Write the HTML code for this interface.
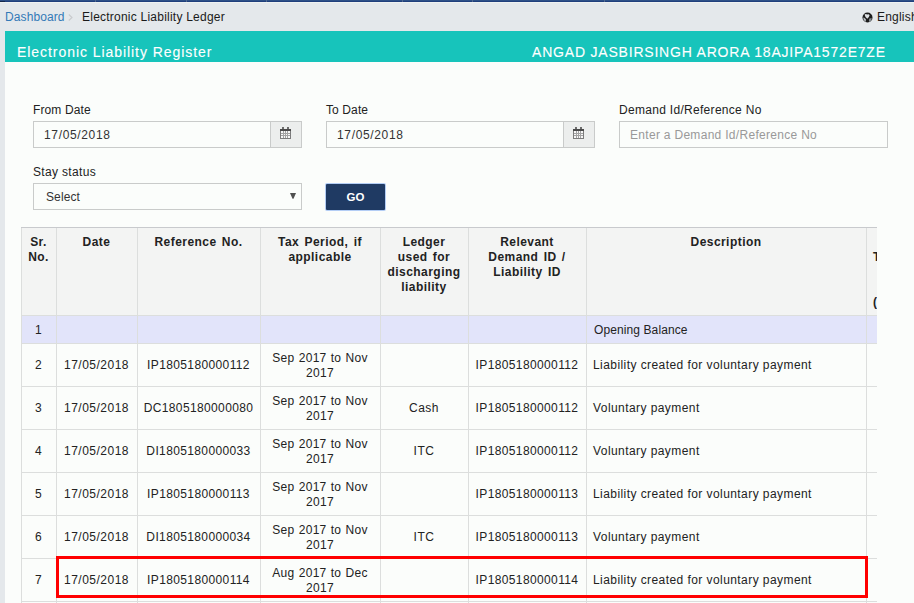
<!DOCTYPE html>
<html><head><meta charset="utf-8"><title>Electronic Liability Register</title>
<style>
*{margin:0;padding:0;box-sizing:border-box}
html,body{width:914px;height:603px;overflow:hidden}
body{background:#e4e8eb;font-family:"Liberation Sans", sans-serif;font-size:12px;color:#222;position:relative}
.a{position:absolute;white-space:nowrap}
svg{display:block}
.t{position:absolute;white-space:nowrap;line-height:15px;height:15px}
.b{font-weight:bold}
</style></head>
<body>
<div class="a" style="left:0;top:0;width:914px;height:1px;background:#2d5087"></div>
<div class="a" style="left:0;top:1px;width:914px;height:1px;background:#1f3f7c"></div>
<div class="a" style="left:0;top:2px;width:914px;height:1px;background:#eff2f1"></div>
<div class="a" style="left:0;top:1px;width:5px;height:1px;background:#15294d"></div>
<div class="a" style="left:95px;top:0;width:1px;height:2px;background:#52698f"></div>
<div class="a" style="left:186px;top:0;width:1px;height:2px;background:#52698f"></div>
<div class="a" style="left:266px;top:0;width:1px;height:2px;background:#52698f"></div>
<div class="a" style="left:402px;top:0;width:1px;height:2px;background:#52698f"></div>
<div class="a" style="left:472px;top:0;width:1px;height:2px;background:#52698f"></div>
<div class="a" style="left:604px;top:0;width:1px;height:2px;background:#52698f"></div>
<div class="t" style="left:5px;top:10px;color:#337ab7;letter-spacing:0.1px">Dashboard</div>
<div class="a" style="left:68px;top:14px;width:5px;height:7px"><svg width="5" height="7" viewBox="0 0 5 7"><path d="M0.8 0.5 L4 3.5 L0.8 6.5" fill="none" stroke="#c9cbcd" stroke-width="1.1"/></svg></div>
<div class="t" style="left:82px;top:10px;color:#1a1a1a;letter-spacing:0.23px">Electronic Liability Ledger</div>
<div class="a" style="left:862px;top:12px;width:11px;height:11px"><svg width="11" height="11" viewBox="0 0 11 11"><circle cx="5.5" cy="5.5" r="5" fill="#1c1c1c"/><path d="M2.6 2.4 Q4 1.4 5.2 2.6 Q6.8 1.6 7.6 3.2 Q7.4 5 5.3 6.8 Q3 5.2 2.6 2.4Z" fill="#dde1e4"/><path d="M1.2 5.6 Q2.8 5.8 4 7.6 L3.6 10 Q1.2 8.8 1.2 5.6Z" fill="#b8bdc2"/><path d="M7.4 6.6 Q8.8 5.8 9.9 6.4 Q9.4 8.8 7.2 9.9 Q6.6 8.2 7.4 6.6Z" fill="#8a9095"/></svg></div>
<div class="t" style="left:877px;top:10px;color:#1a1a1a;letter-spacing:0.2px">English</div>
<div class="a" style="left:5px;top:31px;width:909px;height:31px;background:#17c4bb"></div>
<div class="a" style="left:17px;top:44px;color:#fff;font-size:14px;line-height:16px;letter-spacing:0.94px;-webkit-text-stroke:0.12px #fff">Electronic Liability Register</div>
<div class="a" style="left:532px;top:44px;color:#fff;font-size:14px;line-height:16px;letter-spacing:0.8px;-webkit-text-stroke:0.12px #fff">ANGAD JASBIRSINGH ARORA 18AJIPA1572E7ZE</div>
<div class="a" style="left:5px;top:62px;width:909px;height:541px;background:#fbfdfb"></div>
<div class="t" style="left:33px;top:103px;color:#222;letter-spacing:0.11px">From Date</div>
<div class="t" style="left:326px;top:103px;color:#222;letter-spacing:0.11px">To Date</div>
<div class="t" style="left:619px;top:103px;color:#222;letter-spacing:0.3px">Demand Id/Reference No</div>
<div class="t" style="left:33px;top:165px;color:#222;letter-spacing:0.33px">Stay status</div>
<div class="a" style="left:33px;top:121px;width:269px;height:27px;border:1px solid #c9cbca;background:#fbfdfb"></div>
<div class="a" style="left:270px;top:121px;width:32px;height:27px;border:1px solid #c9cbca;background:#eceeed"></div>
<div class="t" style="left:44px;top:128px;color:#333;letter-spacing:0.65px">17/05/2018</div>
<div class="a" style="left:280px;top:127px;width:11px;height:12px"><svg width="11" height="12" viewBox="0 0 11 12" shape-rendering="crispEdges"><rect x="1" y="4" width="9" height="7" fill="#f7f7f7"/><rect x="2" y="0" width="2" height="2" fill="#6c6c6c"/><rect x="7" y="0" width="2" height="2" fill="#6c6c6c"/><rect x="0" y="2" width="11" height="2" fill="#4a4a4a"/><rect x="0" y="4" width="1" height="8" fill="#7c7c7c"/><rect x="10" y="4" width="1" height="8" fill="#7c7c7c"/><rect x="0" y="11" width="11" height="1" fill="#7c7c7c"/><rect x="3" y="4" width="1" height="7" fill="#a3a3a3"/><rect x="5" y="4" width="1" height="7" fill="#a3a3a3"/><rect x="7" y="4" width="1" height="7" fill="#a3a3a3"/><rect x="1" y="6" width="9" height="1" fill="#a3a3a3"/><rect x="1" y="8" width="9" height="1" fill="#a3a3a3"/></svg></div>
<div class="a" style="left:326px;top:121px;width:269px;height:27px;border:1px solid #c9cbca;background:#fbfdfb"></div>
<div class="a" style="left:563px;top:121px;width:32px;height:27px;border:1px solid #c9cbca;background:#eceeed"></div>
<div class="t" style="left:337px;top:128px;color:#333;letter-spacing:0.65px">17/05/2018</div>
<div class="a" style="left:573px;top:127px;width:11px;height:12px"><svg width="11" height="12" viewBox="0 0 11 12" shape-rendering="crispEdges"><rect x="1" y="4" width="9" height="7" fill="#f7f7f7"/><rect x="2" y="0" width="2" height="2" fill="#6c6c6c"/><rect x="7" y="0" width="2" height="2" fill="#6c6c6c"/><rect x="0" y="2" width="11" height="2" fill="#4a4a4a"/><rect x="0" y="4" width="1" height="8" fill="#7c7c7c"/><rect x="10" y="4" width="1" height="8" fill="#7c7c7c"/><rect x="0" y="11" width="11" height="1" fill="#7c7c7c"/><rect x="3" y="4" width="1" height="7" fill="#a3a3a3"/><rect x="5" y="4" width="1" height="7" fill="#a3a3a3"/><rect x="7" y="4" width="1" height="7" fill="#a3a3a3"/><rect x="1" y="6" width="9" height="1" fill="#a3a3a3"/><rect x="1" y="8" width="9" height="1" fill="#a3a3a3"/></svg></div>
<div class="a" style="left:619px;top:121px;width:269px;height:27px;border:1px solid #c9cbca;background:#fbfdfb"></div>
<div class="t" style="left:630px;top:128px;color:#999;letter-spacing:0.3px">Enter a Demand Id/Reference No</div>
<div class="a" style="left:33px;top:183px;width:269px;height:27px;border:1px solid #c9cbca;background:#fbfdfb"></div>
<div class="t" style="left:46px;top:190px;color:#333;letter-spacing:0.1px">Select</div>
<div class="a" style="left:290px;top:193px;width:6px;height:6px"><svg width="6" height="6" viewBox="0 0 6 6"><path d="M0 0H6L3.5 5.8H2.5Z" fill="#505050"/></svg></div>
<div class="a" style="left:326px;top:184px;width:59px;height:26px;background:#1f3a63;box-shadow:0 0 0 1px #b3cdf5;border-radius:1px"></div>
<div class="t b" style="left:326px;top:190px;width:59px;text-align:center;color:#fff;font-size:11.5px">GO</div>
<div class="a" style="left:21px;top:228px;width:856px;height:87px;background:#f3f4f3"></div>
<div class="a" style="left:21px;top:316px;width:856px;height:27px;background:#e2e4fa"></div>
<div class="a" style="left:21px;top:227px;width:856px;height:1px;background:#c8cacd"></div>
<div class="a" style="left:21px;top:315px;width:856px;height:1px;background:#dcdedd"></div>
<div class="a" style="left:21px;top:343px;width:856px;height:1px;background:#dcdedd"></div>
<div class="a" style="left:21px;top:386px;width:856px;height:1px;background:#dcdedd"></div>
<div class="a" style="left:21px;top:429px;width:856px;height:1px;background:#dcdedd"></div>
<div class="a" style="left:21px;top:472px;width:856px;height:1px;background:#dcdedd"></div>
<div class="a" style="left:21px;top:515px;width:856px;height:1px;background:#dcdedd"></div>
<div class="a" style="left:21px;top:558px;width:856px;height:1px;background:#dcdedd"></div>
<div class="a" style="left:21px;top:601px;width:856px;height:1px;background:#dcdedd"></div>
<div class="a" style="left:21px;top:228px;width:1px;height:375px;background:#dcdedd"></div>
<div class="a" style="left:56px;top:228px;width:1px;height:375px;background:#dcdedd"></div>
<div class="a" style="left:137px;top:228px;width:1px;height:375px;background:#dcdedd"></div>
<div class="a" style="left:260px;top:228px;width:1px;height:375px;background:#dcdedd"></div>
<div class="a" style="left:380px;top:228px;width:1px;height:375px;background:#dcdedd"></div>
<div class="a" style="left:468px;top:228px;width:1px;height:375px;background:#dcdedd"></div>
<div class="a" style="left:586px;top:228px;width:1px;height:375px;background:#dcdedd"></div>
<div class="a" style="left:866px;top:228px;width:1px;height:375px;background:#dcdedd"></div>
<div class="t b" style="left:21px;top:235px;width:35px;text-align:center;color:#222;letter-spacing:0.45px;word-spacing:1.5px">Sr.</div>
<div class="t b" style="left:21px;top:250px;width:35px;text-align:center;color:#222;letter-spacing:0.45px;word-spacing:1.5px">No.</div>
<div class="t b" style="left:56px;top:235px;width:81px;text-align:center;color:#222;letter-spacing:0.45px;word-spacing:1.5px">Date</div>
<div class="t b" style="left:137px;top:235px;width:123px;text-align:center;color:#222;letter-spacing:0.45px;word-spacing:1.5px">Reference No.</div>
<div class="t b" style="left:260px;top:235px;width:120px;text-align:center;color:#222;letter-spacing:0.45px;word-spacing:1.5px">Tax Period, if</div>
<div class="t b" style="left:260px;top:250px;width:120px;text-align:center;color:#222;letter-spacing:0.45px;word-spacing:1.5px">applicable</div>
<div class="t b" style="left:380px;top:235px;width:88px;text-align:center;color:#222;letter-spacing:0.45px;word-spacing:1.5px">Ledger</div>
<div class="t b" style="left:380px;top:250px;width:88px;text-align:center;color:#222;letter-spacing:0.45px;word-spacing:1.5px">used for</div>
<div class="t b" style="left:380px;top:265px;width:88px;text-align:center;color:#222;letter-spacing:0.45px;word-spacing:1.5px">discharging</div>
<div class="t b" style="left:380px;top:280px;width:88px;text-align:center;color:#222;letter-spacing:0.45px;word-spacing:1.5px">liability</div>
<div class="t b" style="left:468px;top:235px;width:118px;text-align:center;color:#222;letter-spacing:0.45px;word-spacing:1.5px">Relevant</div>
<div class="t b" style="left:468px;top:250px;width:118px;text-align:center;color:#222;letter-spacing:0.45px;word-spacing:1.5px">Demand ID /</div>
<div class="t b" style="left:468px;top:265px;width:118px;text-align:center;color:#222;letter-spacing:0.45px;word-spacing:1.5px">Liability ID</div>
<div class="t b" style="left:586px;top:235px;width:280px;text-align:center;color:#222;letter-spacing:0.45px;word-spacing:1.5px">Description</div>
<div class="t b" style="left:873px;top:250px;color:#222">T</div>
<div class="t b" style="left:873px;top:295px;color:#222">(</div>
<div class="a" style="left:877px;top:227px;width:37px;height:376px;background:#fbfdfb"></div>
<div class="t" style="left:21px;top:323px;width:35px;text-align:center;color:#222;letter-spacing:0.5px;word-spacing:0.5px">1</div>
<div class="t" style="left:594px;top:323px;color:#222;letter-spacing:0.1px">Opening Balance</div>
<div class="t" style="left:21px;top:358px;width:35px;text-align:center;color:#222;letter-spacing:0.5px;word-spacing:0.5px">2</div>
<div class="t" style="left:56px;top:358px;width:81px;text-align:center;color:#222;letter-spacing:0.5px;word-spacing:0.5px">17/05/2018</div>
<div class="t" style="left:137px;top:358px;width:123px;text-align:center;color:#222;letter-spacing:0.37px;word-spacing:0.5px">IP1805180000112</div>
<div class="t" style="left:260px;top:351px;width:120px;text-align:center;color:#222;letter-spacing:0.3px;word-spacing:0.5px">Sep 2017 to Nov</div>
<div class="t" style="left:260px;top:366px;width:120px;text-align:center;color:#222;letter-spacing:0.3px;word-spacing:0.5px">2017</div>
<div class="t" style="left:468px;top:358px;width:118px;text-align:center;color:#222;letter-spacing:0.37px;word-spacing:0.5px">IP1805180000112</div>
<div class="t" style="left:593px;top:358px;color:#222;letter-spacing:0.43px">Liability created for voluntary payment</div>
<div class="t" style="left:21px;top:401px;width:35px;text-align:center;color:#222;letter-spacing:0.5px;word-spacing:0.5px">3</div>
<div class="t" style="left:56px;top:401px;width:81px;text-align:center;color:#222;letter-spacing:0.5px;word-spacing:0.5px">17/05/2018</div>
<div class="t" style="left:137px;top:401px;width:123px;text-align:center;color:#222;letter-spacing:0.37px;word-spacing:0.5px">DC1805180000080</div>
<div class="t" style="left:260px;top:394px;width:120px;text-align:center;color:#222;letter-spacing:0.3px;word-spacing:0.5px">Sep 2017 to Nov</div>
<div class="t" style="left:260px;top:409px;width:120px;text-align:center;color:#222;letter-spacing:0.3px;word-spacing:0.5px">2017</div>
<div class="t" style="left:380px;top:401px;width:88px;text-align:center;color:#222;letter-spacing:0.5px;word-spacing:0.5px">Cash</div>
<div class="t" style="left:468px;top:401px;width:118px;text-align:center;color:#222;letter-spacing:0.37px;word-spacing:0.5px">IP1805180000112</div>
<div class="t" style="left:593px;top:401px;color:#222;letter-spacing:0.43px">Voluntary payment</div>
<div class="t" style="left:21px;top:444px;width:35px;text-align:center;color:#222;letter-spacing:0.5px;word-spacing:0.5px">4</div>
<div class="t" style="left:56px;top:444px;width:81px;text-align:center;color:#222;letter-spacing:0.5px;word-spacing:0.5px">17/05/2018</div>
<div class="t" style="left:137px;top:444px;width:123px;text-align:center;color:#222;letter-spacing:0.37px;word-spacing:0.5px">DI1805180000033</div>
<div class="t" style="left:260px;top:437px;width:120px;text-align:center;color:#222;letter-spacing:0.3px;word-spacing:0.5px">Sep 2017 to Nov</div>
<div class="t" style="left:260px;top:452px;width:120px;text-align:center;color:#222;letter-spacing:0.3px;word-spacing:0.5px">2017</div>
<div class="t" style="left:380px;top:444px;width:88px;text-align:center;color:#222;letter-spacing:0.5px;word-spacing:0.5px">ITC</div>
<div class="t" style="left:468px;top:444px;width:118px;text-align:center;color:#222;letter-spacing:0.37px;word-spacing:0.5px">IP1805180000112</div>
<div class="t" style="left:593px;top:444px;color:#222;letter-spacing:0.43px">Voluntary payment</div>
<div class="t" style="left:21px;top:487px;width:35px;text-align:center;color:#222;letter-spacing:0.5px;word-spacing:0.5px">5</div>
<div class="t" style="left:56px;top:487px;width:81px;text-align:center;color:#222;letter-spacing:0.5px;word-spacing:0.5px">17/05/2018</div>
<div class="t" style="left:137px;top:487px;width:123px;text-align:center;color:#222;letter-spacing:0.37px;word-spacing:0.5px">IP1805180000113</div>
<div class="t" style="left:260px;top:480px;width:120px;text-align:center;color:#222;letter-spacing:0.3px;word-spacing:0.5px">Sep 2017 to Nov</div>
<div class="t" style="left:260px;top:495px;width:120px;text-align:center;color:#222;letter-spacing:0.3px;word-spacing:0.5px">2017</div>
<div class="t" style="left:468px;top:487px;width:118px;text-align:center;color:#222;letter-spacing:0.37px;word-spacing:0.5px">IP1805180000113</div>
<div class="t" style="left:593px;top:487px;color:#222;letter-spacing:0.43px">Liability created for voluntary payment</div>
<div class="t" style="left:21px;top:530px;width:35px;text-align:center;color:#222;letter-spacing:0.5px;word-spacing:0.5px">6</div>
<div class="t" style="left:56px;top:530px;width:81px;text-align:center;color:#222;letter-spacing:0.5px;word-spacing:0.5px">17/05/2018</div>
<div class="t" style="left:137px;top:530px;width:123px;text-align:center;color:#222;letter-spacing:0.37px;word-spacing:0.5px">DI1805180000034</div>
<div class="t" style="left:260px;top:523px;width:120px;text-align:center;color:#222;letter-spacing:0.3px;word-spacing:0.5px">Sep 2017 to Nov</div>
<div class="t" style="left:260px;top:538px;width:120px;text-align:center;color:#222;letter-spacing:0.3px;word-spacing:0.5px">2017</div>
<div class="t" style="left:380px;top:530px;width:88px;text-align:center;color:#222;letter-spacing:0.5px;word-spacing:0.5px">ITC</div>
<div class="t" style="left:468px;top:530px;width:118px;text-align:center;color:#222;letter-spacing:0.37px;word-spacing:0.5px">IP1805180000113</div>
<div class="t" style="left:593px;top:530px;color:#222;letter-spacing:0.43px">Voluntary payment</div>
<div class="t" style="left:21px;top:573px;width:35px;text-align:center;color:#222;letter-spacing:0.5px;word-spacing:0.5px">7</div>
<div class="t" style="left:56px;top:573px;width:81px;text-align:center;color:#222;letter-spacing:0.5px;word-spacing:0.5px">17/05/2018</div>
<div class="t" style="left:137px;top:573px;width:123px;text-align:center;color:#222;letter-spacing:0.37px;word-spacing:0.5px">IP1805180000114</div>
<div class="t" style="left:260px;top:566px;width:120px;text-align:center;color:#222;letter-spacing:0.3px;word-spacing:0.5px">Aug 2017 to Dec</div>
<div class="t" style="left:260px;top:581px;width:120px;text-align:center;color:#222;letter-spacing:0.3px;word-spacing:0.5px">2017</div>
<div class="t" style="left:468px;top:573px;width:118px;text-align:center;color:#222;letter-spacing:0.37px;word-spacing:0.5px">IP1805180000114</div>
<div class="t" style="left:593px;top:573px;color:#222;letter-spacing:0.43px">Liability created for voluntary payment</div>
<div class="a" style="left:56px;top:556px;width:812px;height:42px;border:3px solid #ff0000"></div>
</body></html>
